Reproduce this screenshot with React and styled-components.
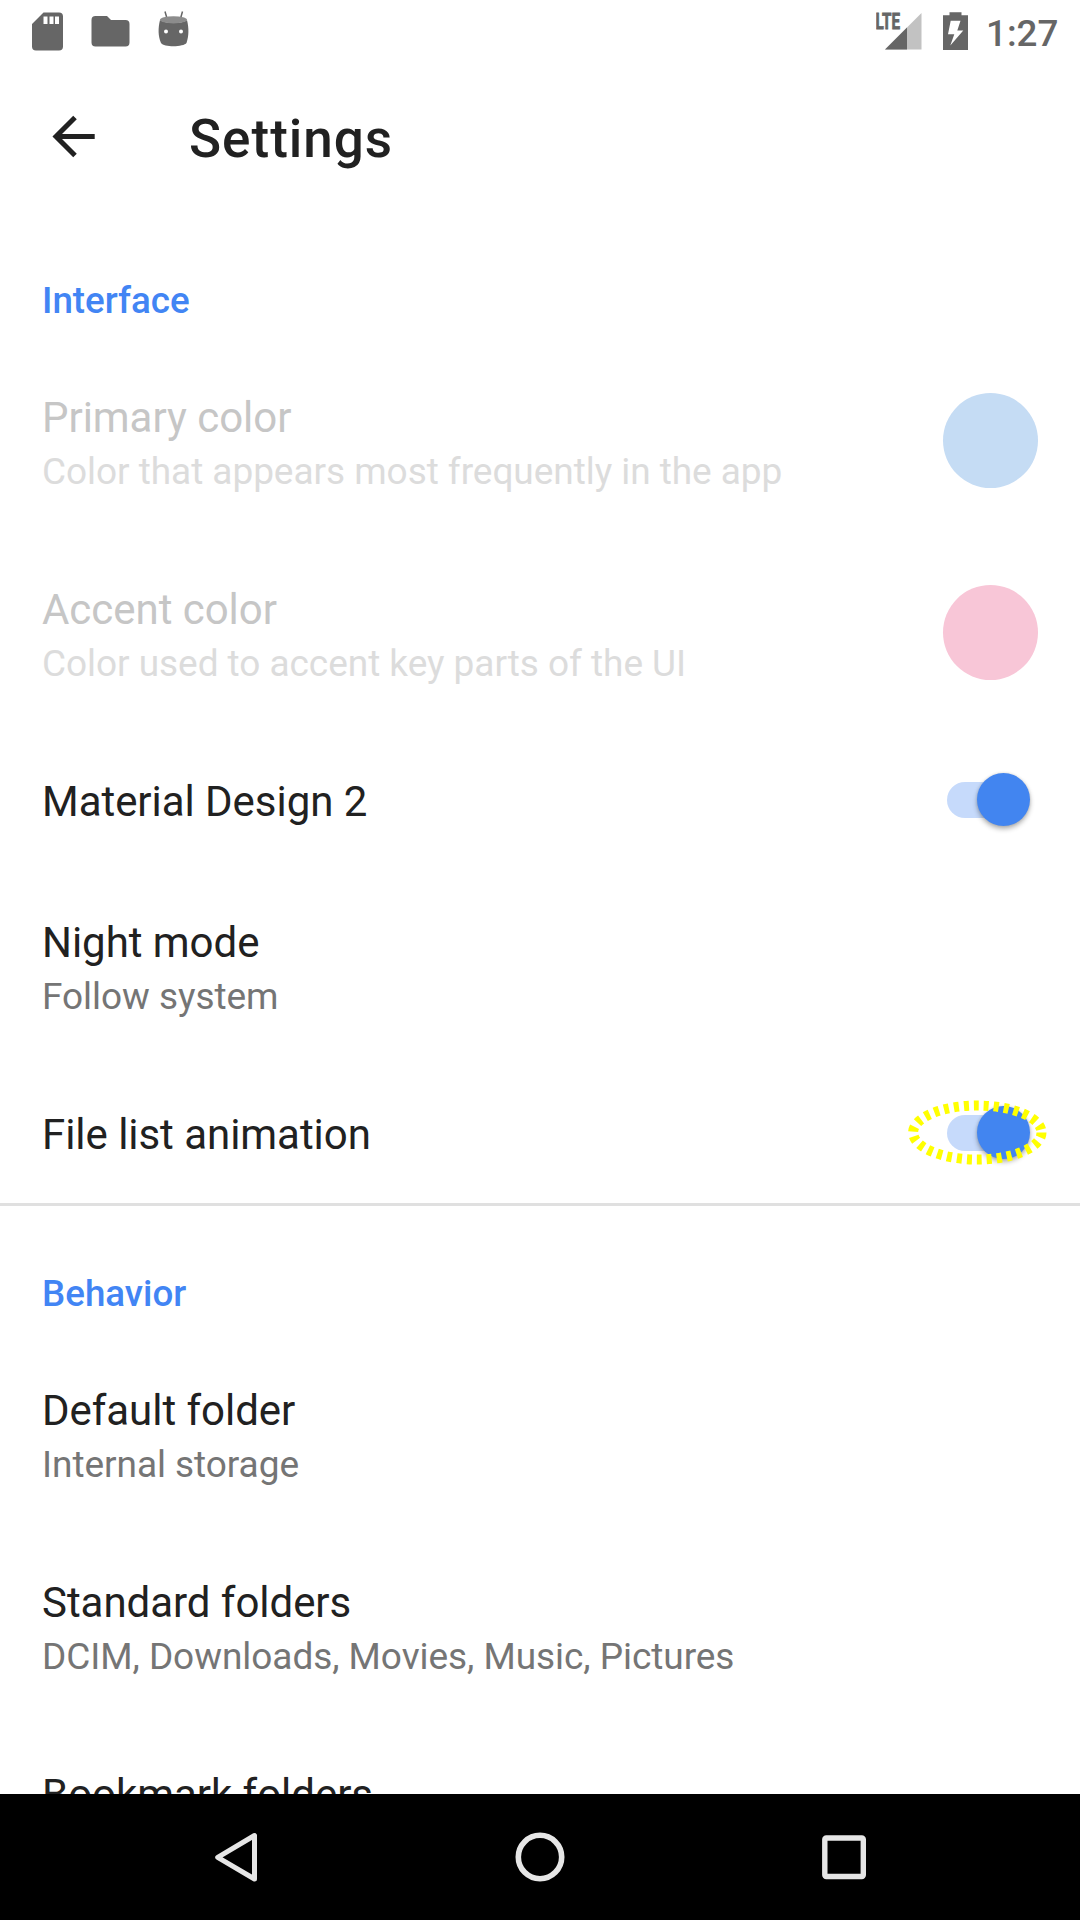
import React from "react";
import styled, { createGlobalStyle } from "styled-components";

const GlobalStyle = createGlobalStyle`
  *, *::before, *::after { box-sizing: border-box; }
  html, body { margin: 0; padding: 0; background: #fff; }
  body { font-family: Roboto, "Noto Sans", sans-serif; }
`;

const Screen = styled.div`
  width: 1080px;
  height: 1920px;
  display: flex;
  flex-direction: column;
  overflow: hidden;
  background: #fff;
`;

const StatusBar = styled.header`
  flex: none;
  height: 63px;
  display: flex;
  justify-content: space-between;
  align-items: flex-start;
  padding: 0 21px 0 32px;
`;

const StatusGroup = styled.div`
  display: flex;
  align-items: flex-start;
`;

const StatusIcon = styled.svg`
  display: block;
  flex: none;
  margin-left: ${(p) => p.$gap || 0}px;
`;

const Clock = styled.span`
  width: 73px;
  margin-left: 18px;
  padding-top: 12px;
  font-size: 36.75px;
  line-height: 44px;
  font-weight: 500;
  white-space: nowrap;
  color: #666;
`;

const Toolbar = styled.div`
  flex: none;
  height: 147px;
  display: flex;
  align-items: center;
  padding: 0 52px;
  gap: 94px;
`;

const BackButton = styled.button`
  display: flex;
  padding: 0;
  border: 0;
  background: none;
`;

const PageTitle = styled.h1`
  margin: 0;
  padding-top: 4px;
  font-size: 53px;
  line-height: 62px;
  font-weight: 500;
  letter-spacing: 1px;
  color: #212121;
`;

const List = styled.main`
  flex: 1;
  min-height: 0;
  overflow: hidden;
  padding-top: 3.5px;
`;

const Section = styled.section`
  border-bottom: 3px solid #e0e0e0;
`;

const Category = styled.h2`
  margin: 0;
  height: 131px;
  padding: 65.5px 42px 0;
  font-size: 36.75px;
  line-height: 43px;
  font-weight: 500;
  color: #4285f4;
`;

const Row = styled.div`
  height: ${(p) => (p.$single ? 141.25 : 192)}px;
  display: flex;
  align-items: center;
  justify-content: space-between;
  padding: 0 42px;
`;

const Labels = styled.div`
  display: flex;
  flex-direction: column;
  gap: 7px;
  padding-top: ${(p) => (p.$single ? 5 : 6)}px;
`;

const Title = styled.div`
  font-size: 42px;
  line-height: 50px;
  letter-spacing: -0.04px;
  color: ${(p) => (p.$disabled ? "#c6c6c6" : "#212121")};
`;

const Summary = styled.div`
  font-size: 37px;
  line-height: 44px;
  letter-spacing: -0.05px;
  color: ${(p) => (p.$disabled ? "#dcdcdc" : "#757575")};
`;

const Swatch = styled.div`
  flex: none;
  width: 95px;
  height: 95px;
  border-radius: 50%;
  background: ${(p) => p.$color};
`;

const Track = styled.div`
  position: relative;
  flex: none;
  width: 76px;
  height: 36px;
  margin-top: 1.5px;
  margin-right: 15.5px;
  border-radius: 18px;
  background: #c6dafb;
`;

const Thumb = styled.div`
  position: absolute;
  left: 30px;
  top: -9px;
  width: 53px;
  height: 53px;
  border-radius: 50%;
  background: #4285f0;
  box-shadow: 0 3px 5px rgba(0, 0, 0, 0.3), 0 0 3px rgba(0, 0, 0, 0.12);
`;

const Highlight = styled.svg`
  position: absolute;
  left: -40px;
  top: -16px;
`;

const NavBar = styled.nav`
  flex: none;
  height: 126px;
  display: flex;
  justify-content: space-between;
  align-items: center;
  padding: 0 204px;
  background: #000;
`;

const NavIcon = styled.svg`
  display: block;
`;

function Switch({ highlighted }) {
  return (
    <Track role="switch" aria-checked="true">
      <Thumb />
      {highlighted && (
        <Highlight width="142" height="68" viewBox="0 0 142 68" fill="none">
          <ellipse cx="70.3" cy="33.5" rx="64.2" ry="27" stroke="#ff0" strokeWidth="10" strokeDasharray="5 5" />
        </Highlight>
      )}
    </Track>
  );
}

function Preference({ title, summary, disabled, children }) {
  return (
    <Row $single={!summary}>
      <Labels $single={!summary}>
        <Title $disabled={disabled}>{title}</Title>
        {summary && <Summary $disabled={disabled}>{summary}</Summary>}
      </Labels>
      {children}
    </Row>
  );
}

export default function App() {
  return (
    <>
      <GlobalStyle />
      <Screen>
        <StatusBar>
          <StatusGroup>
            <StatusIcon width="32" height="63" viewBox="0 0 32 63">
              <path fillRule="evenodd" fill="#666" d="M11.5 12.5H27a4 4 0 0 1 4 4V46.5a4 4 0 0 1-4 4H4a4 4 0 0 1-4-4V24z M11.5 16.5v7.5h4v-7.5z M17.5 16.5v7.5h4v-7.5z M23 16.5v7.5h4v-7.5z" />
            </StatusIcon>
            <StatusIcon $gap={27} width="40" height="63" viewBox="0 0 40 63">
              <path fill="#666" d="M4.5 16h11.5l4 4H34.5a4 4 0 0 1 4 4V42.5a4 4 0 0 1-4 4H4.5a4 4 0 0 1-4-4V20a4 4 0 0 1 4-4z" />
            </StatusIcon>
            <StatusIcon $gap={26} width="34" height="63" viewBox="0 0 34 63">
              <path d="M8 11.5l2 7M25.5 11.5l-2 7" stroke="#666" strokeWidth="1.5" />
              <path fill="#666" d="M3 20C8 24 26 24 30 20C32 28 32 36 29.5 43C27 47 7 47.5 4 43C1 36 1 28 3 20z" />
              <ellipse cx="16.5" cy="19.8" rx="13.5" ry="3.6" fill="#8c8c8c" />
              <circle cx="9" cy="31.6" r="2" fill="#fff" />
              <circle cx="24" cy="31.6" r="2" fill="#fff" />
            </StatusIcon>
          </StatusGroup>
          <StatusGroup>
            <StatusIcon width="46" height="63" viewBox="0 0 46 63">
              <path d="M45.5 13V49.5H9z" fill="#c2c2c2" />
              <path d="M31 27.5V49.5H9z" fill="#666" />
              <path d="M0 11H25V30H13L0 30z" fill="#fff" />
              <text x="-0.5" y="29" fontFamily="Roboto, sans-serif" fontSize="22" fontWeight="700" textLength="24.5" lengthAdjust="spacingAndGlyphs" fill="#666" stroke="#666" strokeWidth="0.8">LTE</text>
            </StatusIcon>
            <StatusIcon $gap={21} width="25" height="63" viewBox="0 0 25 63">
              <path fillRule="evenodd" fill="#666" d="M6.5 12.3h12v3H25V50H0V15.3h6.5z M7.7 20.7L5 34.3h6.3L7.3 45.5L20.3 30.5H14.3L17.5 20.7z" />
            </StatusIcon>
            <Clock>1:27</Clock>
          </StatusGroup>
        </StatusBar>

        <Toolbar>
          <BackButton aria-label="Back">
            <svg width="43" height="43" viewBox="0 0 43 43" fill="none">
              <path d="M23 2.5L4 21.5L23 40.5M4 21.5H42.7" stroke="#212121" strokeWidth="5" />
            </svg>
          </BackButton>
          <PageTitle>Settings</PageTitle>
        </Toolbar>

        <List>
          <Section>
            <Category>Interface</Category>
            <Preference disabled title="Primary color" summary="Color that appears most frequently in the app">
              <Swatch $color="#c5dcf4" />
            </Preference>
            <Preference disabled title="Accent color" summary="Color used to accent key parts of the UI">
              <Swatch $color="#f8c6d7" />
            </Preference>
            <Preference title="Material Design 2">
              <Switch />
            </Preference>
            <Preference title="Night mode" summary="Follow system" />
            <Preference title="File list animation">
              <Switch highlighted />
            </Preference>
          </Section>
          <Section>
            <Category>Behavior</Category>
            <Preference title="Default folder" summary="Internal storage" />
            <Preference title="Standard folders" summary="DCIM, Downloads, Movies, Music, Pictures" />
            <Preference title="Bookmark folders" summary={"\u00a0"} />
          </Section>
        </List>

        <NavBar>
          <NavIcon width="60" height="60" viewBox="204 1827 60 60" fill="none">
            <path d="M254.5 1835.5V1879L217.7 1857.3z" stroke="#e6e6e6" strokeWidth="5" strokeLinejoin="round" />
          </NavIcon>
          <NavIcon width="60" height="60" viewBox="510 1827 60 60" fill="none">
            <circle cx="540" cy="1857" r="21.7" stroke="#e6e6e6" strokeWidth="5.6" />
          </NavIcon>
          <NavIcon width="60" height="60" viewBox="816 1827 60 60" fill="none">
            <rect x="824.8" y="1838" width="38.5" height="38.5" rx="1.5" stroke="#e6e6e6" strokeWidth="5.4" />
          </NavIcon>
        </NavBar>
      </Screen>
    </>
  );
}
